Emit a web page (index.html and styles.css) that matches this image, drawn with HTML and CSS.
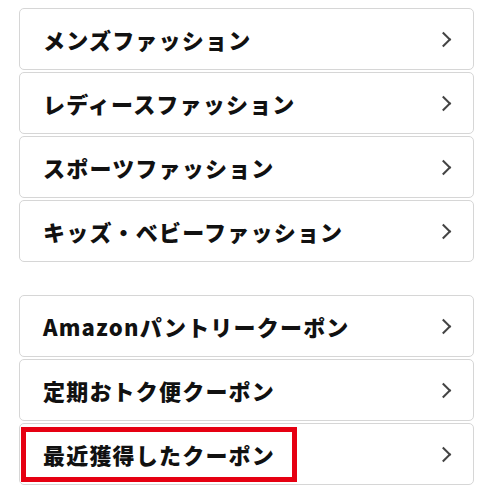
FILE: index.html
```html
<!DOCTYPE html>
<html lang="ja">
<head>
	<meta charset="UTF-8">
	<meta name="viewport" content="width=device-width, initial-scale=1.0">
	<title>カテゴリー</title>
	<link rel="stylesheet" href="styles.css">
</head>
<body>
	<main>
		<ul class="menu">
			<li><a href="#">メンズファッション<span class="chev"></span></a></li>
			<li><a href="#">レディースファッション<span class="chev"></span></a></li>
			<li><a href="#">スポーツファッション<span class="chev"></span></a></li>
			<li><a href="#">キッズ・ベビーファッション<span class="chev"></span></a></li>
		</ul>

		<ul class="menu">
			<li><a href="#">Amazonパントリークーポン<span class="chev"></span></a></li>
			<li><a href="#">定期おトク便クーポン<span class="chev"></span></a></li>
			<li class="marked"><a href="#">最近獲得したクーポン<span class="chev"></span></a></li>
		</ul>
	</main>
</body>
</html>
```

FILE: styles.css
```css
body {
	margin: 0;
	background: #fff;
	font-family: "Noto Sans CJK JP", "Noto Sans", sans-serif;
	color: #111;
}

main {
	width: 455px;
	margin: 8px 0 0 19px;
}

.menu {
	list-style: none;
	margin: 0 0 33px;
	padding: 0;
	display: flex;
	flex-direction: column;
	gap: 2px;
}

.menu li {
	position: relative;
	border: 1px solid #d6d6d6;
	border-radius: 5px;
	background: #fff;
}

.menu a {
	display: flex;
	align-items: center;
	justify-content: space-between;
	height: 60px;
	padding: 0 22px 0 23px;
	color: inherit;
	text-decoration: none;
	font-size: 22px;
	font-weight: 900;
	letter-spacing: 1.2px;
}

.chev {
	width: 9px;
	height: 9px;
	border-top: 2px solid #444;
	border-right: 2px solid #444;
	transform: rotate(45deg);
	margin-right: 2px;
}

.marked::after {
	content: "";
	position: absolute;
	left: 1px;
	top: 3px;
	width: 266px;
	height: 45px;
	border: 5px solid #e60012;
	pointer-events: none;
}
```
